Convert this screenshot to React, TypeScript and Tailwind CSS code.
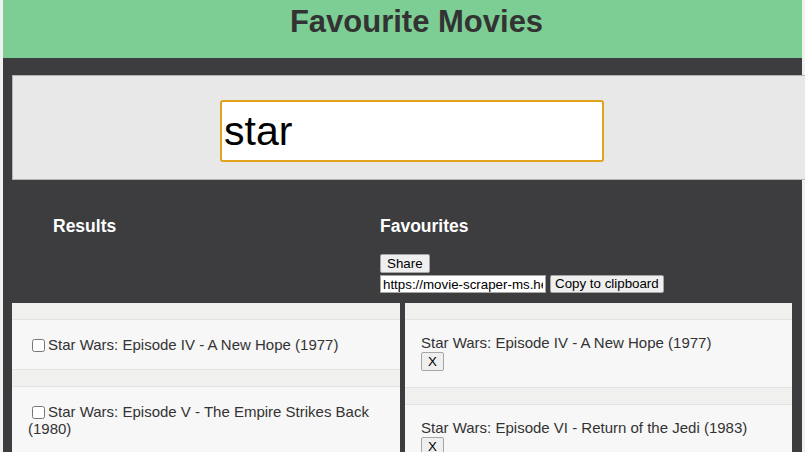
import { useState } from "react";

const results = [
  "Star Wars: Episode IV - A New Hope (1977)",
  "Star Wars: Episode V - The Empire Strikes Back (1980)",
];

const favourites = [
  "Star Wars: Episode IV - A New Hope (1977)",
  "Star Wars: Episode VI - Return of the Jedi (1983)",
];

export default function App() {
  const [query, setQuery] = useState("star");

  return (
    <div className="h-[452px] overflow-hidden bg-[#f1f1f1] px-[3px] font-['Liberation_Sans',Arial,sans-serif] text-[#333]">
      <header className="flex h-[58px] justify-center bg-[#7dce94] pl-[28px] pt-[4px]">
        <h1 className="text-[31px] font-bold leading-[36px] text-[#333]">Favourite Movies</h1>
      </header>

      <main className="h-full bg-[#3d3d3f] pl-[9px] pt-[17px]">
        <div className="flex h-[105px] w-[800px] justify-center border border-[#b4b4b4] bg-[#e8e8e8] pt-[24px]">
          <input
            value={query}
            onChange={e => setQuery(e.target.value)}
            className="h-[62px] w-[384px] rounded-[3px] border-2 border-[#e2a21b] bg-white px-[2px] text-[41px] text-black outline-none"
          />
        </div>

        <div className="flex pt-[36px]">
          <div className="w-[368px] pl-[41px]">
            <h2 className="text-[17.5px] font-bold leading-[21px] text-white">Results</h2>
          </div>
          <div>
            <h2 className="text-[17.5px] font-bold leading-[21px] text-white">Favourites</h2>
            <button className="mt-[17px] block h-[19px] rounded-[2px] border border-[#a6a6a6] bg-[#efefef] px-[6px] text-[13.33px] leading-none text-black">
              Share
            </button>
            <div className="mt-[2px] flex items-center gap-[4px]">
              <input
                readOnly
                value="https://movie-scraper-ms.herokuapp.com/?ids=tt0076759,tt0086190"
                className="h-[18px] w-[166px] border border-[#a6a6a6] bg-white px-[2px] text-[13.33px] leading-none text-black outline-none"
              />
              <button className="h-[18px] rounded-[2px] border border-[#a6a6a6] bg-[#efefef] px-[4px] text-[13.33px] leading-none text-black">
                Copy to clipboard
              </button>
            </div>
          </div>
        </div>

        <div className="mt-[10px] flex gap-[5px]">
          <ul className="w-[388px] bg-[#f0f0ef]">
            {results.map(title => (
              <li key={title} className="mt-[16px] border-y border-[#e3e3e3] bg-[#f7f7f7] p-[16px] text-[15px] leading-[17px]">
                <label>
                  <input type="checkbox" className="ml-[4px] mr-[3px] inline-block h-[13px] w-[13px] align-[-2px]" />
                  {title}
                </label>
              </li>
            ))}
          </ul>
          <ul className="w-[387px] bg-[#f0f0ef]">
            {favourites.map(title => (
              <li key={title} className="mt-[16px] border-y border-[#e3e3e3] bg-[#f7f7f7] pb-[16px] pl-[16px] pt-[14px] text-[15px] leading-[17px]">
                <div>{title}</div>
                <button className="mt-[1px] block h-[19px] w-[23px] rounded-[2px] border border-[#a6a6a6] bg-[#efefef] text-[13.33px] leading-none text-black">
                  X
                </button>
              </li>
            ))}
          </ul>
        </div>
      </main>
    </div>
  );
}
